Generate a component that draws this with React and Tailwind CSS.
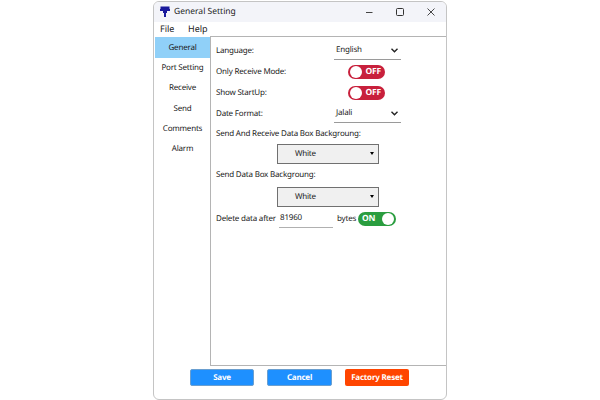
import React from "react";

function Toggle({ on }) {
  return on ? (
    <div className="w-[38px] h-[14px] rounded-full bg-[#2a9d3f] flex items-center justify-between pl-[4px] pr-[2px]">
      <span className="text-white text-[8.5px] font-bold leading-none pt-px">ON</span>
      <span className="w-[12px] h-[12px] rounded-full bg-white" />
    </div>
  ) : (
    <div className="w-[37px] h-[14px] rounded-full bg-[#c8203c] flex items-center justify-between pl-[2px] pr-[4px]">
      <span className="w-[12px] h-[12px] rounded-full bg-white" />
      <span className="text-white text-[8.5px] font-bold leading-none pt-px">OFF</span>
    </div>
  );
}

function Chevron() {
  return (
    <svg width="7" height="5" viewBox="0 0 7 5" fill="none" stroke="#222" strokeWidth="1.4">
      <path d="M0.5 0.8l3 3 3-3" />
    </svg>
  );
}

function Underlined({ label }) {
  return (
    <div className="w-[67px] h-[18px] border-b border-[#9a9a9a] flex items-center justify-between pl-[2px] pr-[3px]">
      <span>{label}</span>
      <Chevron />
    </div>
  );
}

function Row({ label, children }) {
  return (
    <div className="flex items-center h-[21px]">
      <span className="w-[118px] shrink-0">{label}</span>
      {children}
    </div>
  );
}

function Combo() {
  return (
    <div className="ml-[61px] w-[102px] h-[19.5px] border border-[#707070] bg-[#f0f0f0] flex items-center justify-between pr-[4px]">
      <span className="ml-[17px]">White</span>
      <span className="w-0 h-0 border-x-[2.5px] border-x-transparent border-t-[3px] border-t-black" />
    </div>
  );
}

export default function App() {
  const tabs = ["General", "Port Setting", "Receive", "Send", "Comments", "Alarm"];
  return (
    <div className="w-[600px] h-[400px] bg-white pt-px overflow-hidden [text-rendering:geometricPrecision]" style={{ fontFamily: '"Noto Sans", sans-serif' }}>
      <div className="mx-auto w-[294px] h-[399px] border border-[#c4c4c4] rounded-[6px] overflow-hidden flex flex-col text-[8px] tracking-[-0.2px] text-[#222] bg-white">
        <div className="h-[20px] bg-[#f3f4f9] flex items-center pl-[5px] shrink-0">
          <svg width="12" height="12" viewBox="0 0 12 12" fill="#1a1a9c">
            <path d="M1.5 0.5h9v2.5H11v2H8v2H7V11H5V7H4V5H1V3h.5z" />
          </svg>
          <span className="ml-[3px] text-[8.5px] tracking-normal">General Setting</span>
          <div className="ml-auto flex items-center gap-[23px] pr-[11px]">
            <svg width="7" height="8" viewBox="0 0 7 8" stroke="#444" strokeWidth="1.2"><path d="M0 4.5h6.5" /></svg>
            <svg width="8" height="8" viewBox="0 0 8 8" fill="none" stroke="#333" strokeWidth="1"><rect x="0.5" y="0.5" width="7" height="7" rx="1" /></svg>
            <svg width="8" height="8" viewBox="0 0 8 8" stroke="#333" strokeWidth="0.9"><path d="M0.5 0.5l7 7M7.5 0.5l-7 7" /></svg>
          </div>
        </div>
        <div className="h-[14px] flex items-center pl-[6px] text-[9px] tracking-normal shrink-0">
          <span className="w-[28px]">File</span>
          <span>Help</span>
        </div>
        <div className="h-[330px] flex shrink-0">
          <div className="w-[56px] pl-[1px] pt-px flex flex-col shrink-0">
            {tabs.map((t, i) => (
              <div key={t} className={`flex items-center justify-center ${i === 0 ? "h-[21px] bg-[#90d0f8]" : "h-[20.25px]"}`}>{t}</div>
            ))}
          </div>
          <div className="flex-1 border-l border-t border-b border-[#b4b4b4] pl-[5px] pt-[3px]">
            <Row label="Language:"><Underlined label="English" /></Row>
            <Row label="Only Receive Mode:"><div className="ml-[14px]"><Toggle /></div></Row>
            <Row label="Show StartUp:"><div className="ml-[14px]"><Toggle /></div></Row>
            <Row label="Date Format:"><Underlined label="Jalali" /></Row>
            <div className="h-[20px] flex items-center">Send And Receive Data Box Backgroung:</div>
            <Combo />
            <div className="h-[23.5px] flex items-center">Send Data Box Backgroung:</div>
            <Combo />
            <div className="flex items-center h-[22px] mt-px">
              <span className="w-[63px] shrink-0 whitespace-nowrap">Delete data after</span>
              <span className="w-[54px] h-[18px] border-b border-[#b0b0b0] flex items-center pl-[1px]">81960</span>
              <span className="ml-[4px] w-[21px] shrink-0">bytes</span>
              <Toggle on />
            </div>
          </div>
        </div>
        <div className="flex-1 flex items-start pt-[3px] pl-[36px] gap-[13px] font-bold text-white">
          <div className="w-[64px] h-[17px] rounded-[2px] bg-[#1e90ff] border border-[#6a9fd0] flex items-center justify-center">Save</div>
          <div className="w-[65px] h-[17px] rounded-[2px] bg-[#1e90ff] border border-[#6a9fd0] flex items-center justify-center">Cancel</div>
          <div className="w-[64px] h-[17px] rounded-[2px] bg-[#ff4500] flex items-center justify-center">Factory Reset</div>
        </div>
      </div>
    </div>
  );
}
